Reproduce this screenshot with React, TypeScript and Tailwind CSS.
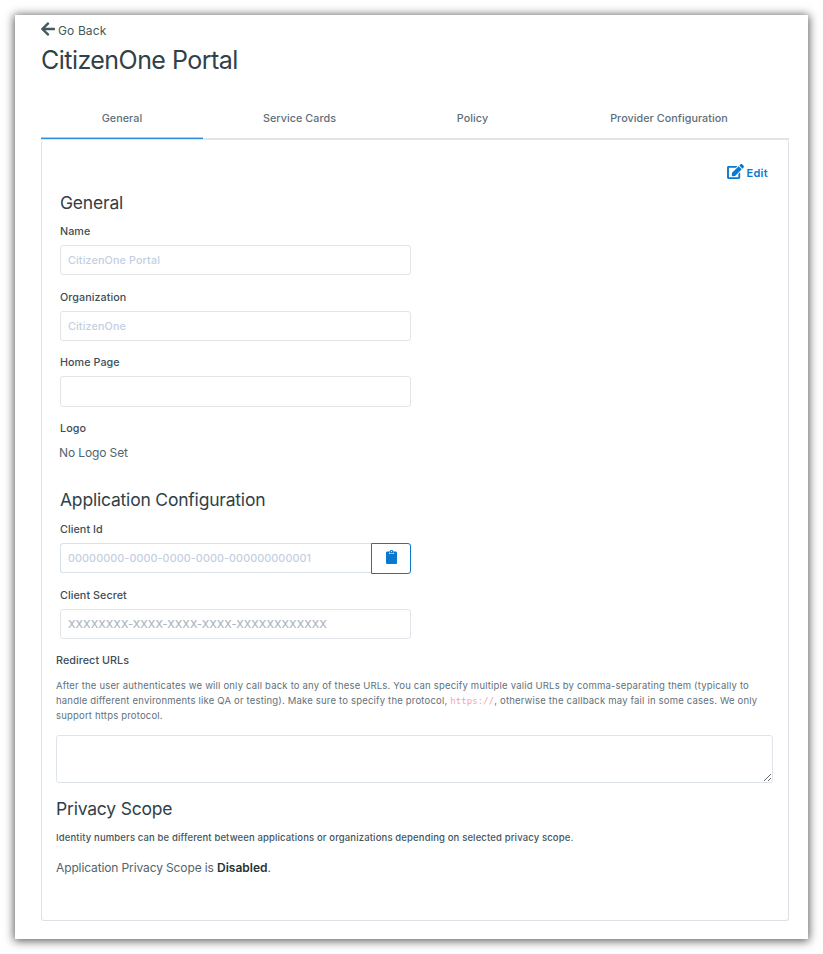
import type { ReactNode } from "react";
import { FaArrowLeft, FaEdit } from "react-icons/fa";

const TABS = [
  { label: "General", width: "w-[162px]" },
  { label: "Service Cards", width: "w-[193px]" },
  { label: "Policy", width: "w-[153px]" },
  { label: "Provider Configuration", width: "w-[240px]" },
];

function Heading({ children }: { children: ReactNode }) {
  return <h2 className="h-6 text-[17.5px] leading-6 tracking-[-0.2px] text-[#304148]">{children}</h2>;
}

function Label({ children }: { children: ReactNode }) {
  return <label className="block h-4 text-[10.75px] leading-[18px] font-[450] tracking-[0.06px] text-[#3d4e56]">{children}</label>;
}

function Field({ label, value }: { label: string; value: string }) {
  return (
    <div>
      <Label>{label}</Label>
      <input
        readOnly
        value={value}
        className="mt-[6px] block h-[30.4px] w-[351px] rounded-[3px] border border-[#e1e5ea] bg-white px-[7px] pt-px text-[10.75px] font-[450] tracking-[0.14px] text-[#c3cfdf] outline-none"
      />
    </div>
  );
}

export default function App() {
  return (
    <div className="h-[954px] w-[823px] overflow-hidden bg-white p-[15px] font-['Inter',sans-serif] antialiased">
      <main className="h-[924px] w-[793px] bg-white pt-2 pr-[19px] pl-[26px] shadow-[0_1px_9px_1px_rgba(0,0,0,0.65)]">
        <a className="-ml-px flex h-4 items-center text-[12px] text-[#445860]">
          <FaArrowLeft className="mb-1 size-4" />
          <span className="ml-[2px] tracking-[0.12px]">Go Back</span>
        </a>
        <h1 className="mt-[5px] h-8 text-[25px] leading-8 tracking-[-0.54px] text-[#304148]">CitizenOne Portal</h1>

        <nav className="mt-[22px] flex h-[42px] border-b-2 border-[#e2e5e8]">
          {TABS.map((tab, i) => (
            <div
              key={tab.label}
              className={`-mb-px flex h-[41px] shrink-0 justify-center pt-[13px] text-[10.75px] leading-4 font-[450] tracking-[0.06px] text-[#5d6f78] ${tab.width} ${
                i === 0 ? "border-b border-[#2f8ddb] shadow-[inset_0_-1px_0_#a5cdee]" : ""
              }`}
            >
              {tab.label}
            </div>
          ))}
        </nav>

        <section className="h-[781px] w-[748px] rounded-[3px] border border-t-0 border-[#dde1e7] pt-[25px] pr-[15px] pl-[14px]">
          <button className="mr-[5px] ml-auto flex h-4 items-center text-[11px] font-semibold text-[#0b78d0]">
            <FaEdit className="mr-[3px] mb-[3px] h-[15px] w-[17px]" />
            <span className="tracking-[0.3px]">Edit</span>
          </button>

          <div className="pl-1">
            <div className="mt-[10px]">
              <Heading>General</Heading>
            </div>
            <div className="mt-2 flex flex-col gap-[13.2px]">
              <Field label="Name" value="CitizenOne Portal" />
              <Field label="Organization" value="CitizenOne" />
              <Field label="Home Page" value="" />
              <div>
                <Label>Logo</Label>
                <p className="mt-2 -ml-px h-4 text-[12px] leading-[18px] tracking-[-0.12px] text-[#52646c]">No Logo Set</p>
              </div>
            </div>

            <div className="mt-[28.6px]">
              <Heading>Application Configuration</Heading>
            </div>
            <div className="mt-[8.6px]">
              <Label>Client Id</Label>
              <div className="mt-[6px] flex w-[351px]">
                <input
                  readOnly
                  value="00000000-0000-0000-0000-000000000001"
                  className="h-[30px] w-[311px] rounded-l-[3px] border border-r-0 border-[#d9e0e7] px-[7px] pt-px text-[10.75px] font-[450] tracking-[0.1px] text-[#c3cfdf] outline-none"
                />
                <button className="flex h-[31px] w-10 items-center justify-center rounded-r-[3px] border border-[#0b78d0] text-[#0b78d0]">
                  <svg viewBox="0 0 11 14" className="mb-[2px] h-[14px] w-[11px]">
                    <path
                      fill="currentColor"
                      fillRule="evenodd"
                      d="M1.3 1.5h2.3a2 2 0 0 1 3.8 0h2.3c.7 0 1.3.6 1.3 1.3v9.9c0 .7-.6 1.3-1.3 1.3H1.3C.6 14 0 13.400 0 12.700V2.800c0-.7.6-1.3 1.300-1.300Zm4.200-.5a.6.600 0 1 0 0 1.200.6.600 0 0 0 0-1.200ZM3 2.500v1.200c0 .2.1.3.3.300h4.400c.2 0 .3-.1.3-.300V2.500h-.6v.9H3.600v-.900Z"
                    />
                  </svg>
                </button>
              </div>
            </div>
            <div className="mt-[13px]">
              <Label>Client Secret</Label>
              <input
                readOnly
                value="XXXXXXXX-XXXX-XXXX-XXXX-XXXXXXXXXXXX"
                className="mt-[6px] block h-[30px] w-[351px] rounded-[3px] border border-[#e1e5ea] px-[7px] pt-px text-[10.75px] font-[450] tracking-[0.03px] text-[#aeb8c2] outline-none"
              />
            </div>
          </div>

          <div className="mt-[13px]">
            <Label>Redirect URLs</Label>
          </div>
          <p className="mt-[10px] text-[9.5px] leading-[15px] tracking-[0.19px] whitespace-nowrap text-[#62717b]">
            After the user authenticates we will only call back to any of these URLs. You can specify multiple valid URLs by comma-separating them (typically to
            <br />
            handle different environments like QA or testing). Make sure to specify the protocol,{" "}
            <code className="font-['DejaVu_Sans_Mono',monospace] text-[9px] leading-none tracking-[0.08px] text-[#f4a3b1]">https://</code>, otherwise the callback may fail in some cases. We only
            <br />
            support https protocol.
          </p>
          <textarea readOnly className="mt-3 block h-12 w-[717px] resize rounded-[3px] border border-[#dfe4ea] outline-none" />

          <div className="mt-[14px]">
            <Heading>Privacy Scope</Heading>
          </div>
          <p className="mt-2 h-4 text-[9.5px] leading-[18px] font-medium tracking-[0.14px] text-[#44565e]">
            Identity numbers can be different between applications or organizations depending on selected privacy scope.
          </p>
          <p className="mt-[14px] h-4 text-[12px] leading-[18px] tracking-[-0.12px] text-[#52646c]">
            Application Privacy Scope is <b className="font-semibold tracking-normal text-[#263238]">Disabled</b>.
          </p>
        </section>
      </main>
    </div>
  );
}
